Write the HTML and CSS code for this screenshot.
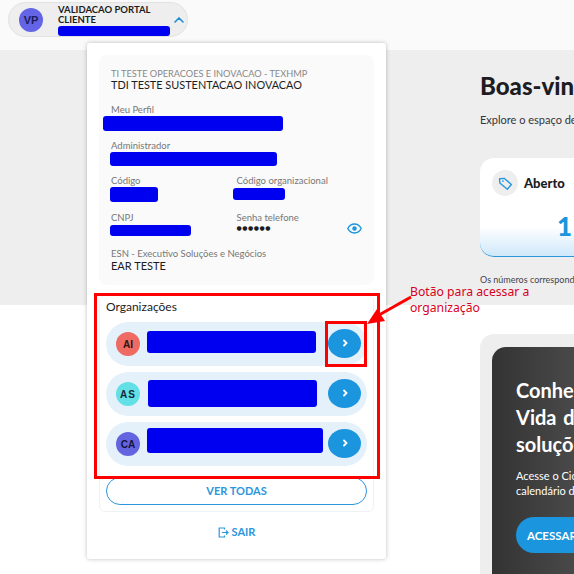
FILE: index.html
```html
<!DOCTYPE html>
<html lang="en">
<head>
    <meta charset="UTF-8">
    <meta name="viewport" content="width=device-width, initial-scale=1.0">
    <title>Portal Cliente</title>
    <link rel="stylesheet" href="styles.css">
</head>
<body>

<!-- Header -->
<header class="topbar">
    <div class="user-pill">
        <span class="avatar avatar-vp">VP</span>
        <div class="user-text">
            <div class="user-name">VALIDACAO PORTAL CLIENTE</div>
            <div class="redact redact-user"></div>
        </div>
        <svg class="chevron" width="10" height="6" viewBox="0 0 10 6"><path d="M1 5l4-4 4 4" fill="none" stroke="#1b8fd6" stroke-width="1.6" stroke-linecap="round"/></svg>
    </div>
</header>

<!-- Welcome band -->
<section class="hero">
    <h1>Boas-vindas</h1>
    <p class="hero-sub">Explore o espaço de atendimento</p>
    <div class="stat-card">
        <div class="stat-head">
            <span class="stat-icon">
                <svg width="15" height="15" viewBox="0 0 16 16"><path d="M2 2.5h5.2l7 7-4.7 4.7-7.5-7.1z" fill="none" stroke="#2b96dc" stroke-width="1.5" stroke-linejoin="round" transform="rotate(-4 8 8)"/><circle cx="5.2" cy="5.4" r="1" fill="#2b96dc"/></svg>
            </span>
            <span class="stat-label">Aberto</span>
        </div>
        <div class="stat-value">1</div>
    </div>
    <p class="hero-note">Os números correspondem aos chamados</p>
</section>

<!-- Lower promo -->
<section class="promo-wrap">
    <div class="promo-frame">
        <div class="promo">
            <h2>Conheça o Ciclo<br>Vida das nossas<br>soluções</h2>
            <p>Acesse o Ciclo de Vida e veja o<br>calendário de todas as soluções</p>
            <button class="promo-btn">ACESSAR</button>
        </div>
    </div>
</section>

<!-- Dropdown panel -->
<div class="panel">
    <div class="info-card">
        <div class="info-small">TI TESTE OPERACOES E INOVACAO - TEXHMP</div>
        <div class="info-strong">TDI TESTE SUSTENTACAO INOVACAO</div>

        <div class="label label-perfil">Meu Perfil</div>
        <div class="redact redact-perfil"></div>

        <div class="label label-admin">Administrador</div>
        <div class="redact redact-admin"></div>

        <div class="info-grid">
            <div>
                <div class="label">Código</div>
                <div class="redact redact-codigo"></div>
            </div>
            <div>
                <div class="label">Código organizacional</div>
                <div class="redact redact-org"></div>
            </div>
            <div>
                <div class="label">CNPJ</div>
                <div class="redact redact-cnpj"></div>
            </div>
            <div class="senha">
                <div class="label">Senha telefone</div>
                <div class="dots">&#9679;&#9679;&#9679;&#9679;&#9679;&#9679;</div>
                <svg class="eye" width="15" height="11" viewBox="0 0 15 11"><path d="M.8 5.5C2.3 2.6 4.7 1 7.5 1s5.2 1.6 6.7 4.5C12.7 8.4 10.3 10 7.5 10S2.3 8.4.8 5.5z" fill="none" stroke="#1b95dd" stroke-width="1.4"/><circle cx="7.5" cy="5.5" r="2.2" fill="#1b95dd"/></svg>
            </div>
        </div>

        <div class="label label-esn">ESN - Executivo Soluções e Negócios</div>
        <div class="info-ear">EAR TESTE</div>
    </div>

    <div class="org-card">
        <h3>Organizações</h3>
        <div class="org-row">
            <span class="avatar avatar-ai">AI</span>
            <div class="redact redact-row1"></div>
            <button class="go-btn"><svg width="6" height="8" viewBox="0 0 6 8"><path d="M2 1.5L4.5 4 2 6.5" fill="none" stroke="#fff" stroke-width="1.8" stroke-linecap="round"/></svg></button>
        </div>
        <div class="org-row">
            <span class="avatar avatar-as">AS</span>
            <div class="redact redact-row2"></div>
            <button class="go-btn"><svg width="6" height="8" viewBox="0 0 6 8"><path d="M2 1.5L4.5 4 2 6.5" fill="none" stroke="#fff" stroke-width="1.8" stroke-linecap="round"/></svg></button>
        </div>
        <div class="org-row">
            <span class="avatar avatar-ca">CA</span>
            <div class="redact redact-row3"></div>
            <button class="go-btn"><svg width="6" height="8" viewBox="0 0 6 8"><path d="M2 1.5L4.5 4 2 6.5" fill="none" stroke="#fff" stroke-width="1.8" stroke-linecap="round"/></svg></button>
        </div>
        <button class="see-all">VER TODAS</button>
    </div>

    <a class="logout">
        <svg width="11" height="11" viewBox="0 0 11 11"><path d="M6.5 2.5V1H1.2v9h5.3V8.5M4 5.5h6M8 3.5l2 2-2 2" fill="none" stroke="#2b96dc" stroke-width="1.2"/></svg>
        SAIR
    </a>
</div>

<!-- Annotations drawn over the screenshot -->
<div class="note-box note-box-list"></div>
<div class="note-box note-box-btn"></div>
<svg class="note-arrow" width="50" height="32" viewBox="0 0 50 32"><path d="M44 2L12 20" stroke="#f00" stroke-width="3"/><path d="M0 29l10-15 8 12z" fill="#f00"/></svg>
<div class="note-text">Botão para acessar a<br>organização</div>

</body>
</html>
```

FILE: styles.css
```css
html, body {
    margin: 0;
    height: 574px;
    overflow: hidden;
}
body {
    font-family: "Lato", "Open Sans", sans-serif;
    background-color: #fff;
    color: #1c1c22;
    position: relative;
}

/* Redacted bars */
.redact {
    background-color: #0000f0;
    border-radius: 3px;
}
.redact-user { width: 112px; height: 10px; margin-top: 1px; }
.redact-perfil { width: 180px; height: 15px; margin-left: -8px; }
.redact-admin { width: 167px; height: 14px; margin-left: -1px; }
.redact-codigo { width: 48px; height: 15px; margin-left: -1px; }
.redact-org { width: 52px; height: 12px; margin-left: -4px; margin-top: 1px; }
.redact-cnpj { width: 81px; height: 11px; margin-left: -1px; margin-top: 1px; }
.redact-row1 { width: 169px; height: 22px; margin-bottom: 5px; }
.redact-row2 { width: 169px; height: 27px; margin-bottom: 1px; }
.redact-row3 { width: 176px; height: 25px; margin-bottom: 7px; }

/* Header */
.topbar {
    height: 50px;
    background-color: #fafafa;
    box-sizing: border-box;
    padding: 2px 0 0 8px;
}
.user-pill {
    width: 180px;
    height: 35px;
    box-sizing: border-box;
    padding-left: 10px;
    background-color: #eee;
    border: 1px solid #e2e2e2;
    border-radius: 18px;
    display: flex;
    align-items: center;
}
.user-text {
    width: 112px;
    margin-left: 15px;
}
.user-name {
    font-size: 9.5px;
    font-weight: 700;
    line-height: 10px;
    margin-top: 1px;
}
.chevron {
    margin-left: 4px;
}

/* Avatars */
.avatar {
    flex: none;
    width: 24px;
    height: 24px;
    border-radius: 50%;
    display: flex;
    align-items: center;
    justify-content: center;
    font-family: "Liberation Sans", sans-serif;
    font-size: 10px;
    font-weight: 700;
}
.avatar-vp { background-color: #6464e6; color: #1c1c5a; font-size: 11px; }
.avatar-ai { background-color: #ee6a62; color: #2a1414; }
.avatar-as { background-color: #62e0e6; color: #14283c; letter-spacing: 1px; }
.avatar-ca { background-color: #6464e0; color: #14143c; }

/* Welcome band */
.hero {
    height: 255px;
    box-sizing: border-box;
    background-color: #eee;
    padding: 22px 0 0 480px;
    width: 100%;
    white-space: nowrap;
}
.hero h1 {
    margin: 0;
    font-size: 24px;
    font-weight: 900;
    line-height: 28px;
}
.hero-sub {
    margin: 13px 0 0;
    font-size: 11px;
    line-height: 14px;
    color: #33333a;
}
.stat-card {
    margin-top: 31px;
    width: 300px;
    height: 99px;
    box-sizing: border-box;
    background: linear-gradient(#fff 70%, #cfe8fa);
    border-bottom: 1px solid #2b96dc;
    border-radius: 14px;
    padding: 12px;
}
.stat-head {
    display: flex;
    align-items: center;
}
.stat-icon {
    width: 26px;
    height: 26px;
    border-radius: 50%;
    background-color: #eee;
    display: flex;
    align-items: center;
    justify-content: center;
}
.stat-label {
    margin-left: 6px;
    font-size: 13px;
    font-weight: 900;
}
.stat-value {
    margin: 16px 0 0 65px;
    font-size: 26px;
    font-weight: 900;
    line-height: 28px;
    color: #1b95dd;
}
.hero-note {
    margin: 17px 0 0;
    font-size: 9px;
    line-height: 12px;
    color: #44444c;
}

/* Lower promo */
.promo-wrap {
    padding: 29px 0 0 480px;
    white-space: nowrap;
}
.promo-frame {
    width: 300px;
    height: 300px;
    box-sizing: border-box;
    background-color: #eee;
    border-radius: 14px;
    padding: 13px 0 0 12px;
}
.promo {
    height: 300px;
    box-sizing: border-box;
    background: linear-gradient(90deg, #333 0, #4e4e4e 100px);
    border-radius: 14px 0 0 0;
    padding: 30px 0 0 24px;
    color: #fff;
}
.promo h2 {
    margin: 0;
    font-size: 20px;
    font-weight: 700;
    line-height: 27px;
    word-spacing: 2px;
}
.promo p {
    margin: 10px 0 0;
    font-size: 11px;
    line-height: 15px;
}
.promo-btn {
    margin-top: 19px;
    width: 140px;
    height: 36px;
    padding: 0 0 0 11px;
    text-align: left;
    border: none;
    border-radius: 18px;
    background-color: #1b95dd;
    color: #fff;
    font-family: inherit;
    font-size: 11.5px;
    font-weight: 700;
}

/* Dropdown panel */
.panel {
    position: absolute;
    left: 87px;
    top: 43px;
    width: 299px;
    height: 516px;
    box-sizing: border-box;
    background-color: #fff;
    border-radius: 3px;
    box-shadow: 0 0 4px rgba(0,0,0,0.25);
    padding: 12px 12px 0;
}
.info-card {
    height: 230px;
    box-sizing: border-box;
    background-color: #fafafa;
    border-radius: 8px;
    padding: 13px 12px 0;
}
.label {
    font-size: 9.5px;
    line-height: 12px;
    color: #777;
}
.info-small {
    font-size: 9.2px;
    line-height: 12px;
    color: #888;
}
.info-strong {
    margin-top: -2px;
    font-size: 10.9px;
    font-weight: 400;
    line-height: 13px;
}
.label-perfil { margin-top: 13px; }
.label-admin { margin-top: 9px; }
.info-grid {
    display: grid;
    grid-template-columns: 125.5px 1fr;
    row-gap: 10px;
    margin-top: 9px;
}
.senha {
    position: relative;
}
.dots {
    font-family: "DejaVu Sans", sans-serif;
    font-size: 6px;
    line-height: 12px;
    letter-spacing: 0.5px;
    margin-top: -2px;
}
.eye {
    position: absolute;
    right: 0;
    top: 11px;
}
.label-esn { margin-top: 12px; }
.info-ear {
    margin-top: -1px;
    font-size: 11px;
    font-weight: 400;
    line-height: 13px;
}

.org-card {
    margin-top: 10px;
    height: 217px;
    box-sizing: border-box;
    border: 1px solid #eef2f6;
    border-radius: 6px;
    padding: 3px 6px 0;
}
.org-card h3 {
    margin: 0 0 8px;
    font-size: 12px;
    font-weight: 400;
    line-height: 15px;
    color: #222;
}
.org-row {
    height: 44px;
    margin-bottom: 6px;
    box-sizing: border-box;
    background-color: #e4f1fb;
    border-radius: 22px;
    padding: 0 6px 0 10px;
    display: flex;
    align-items: center;
}
.org-row .redact {
    margin-left: 7px;
}
.org-row .redact-row2 {
    margin-left: 8px;
}
.org-row .go-btn {
    margin-left: auto;
}
.go-btn {
    flex: none;
    width: 33px;
    height: 29px;
    padding: 0 0 2px;
    border: none;
    border-radius: 50%;
    background-color: #1b95dd;
    margin-bottom: 2px;
}
.see-all {
    display: block;
    width: 100%;
    height: 28px;
    margin-top: 11px;
    padding-bottom: 3px;
    background-color: #fff;
    border: 1px solid #2b96dc;
    border-radius: 14px;
    color: #2b96dc;
    font-family: inherit;
    font-size: 11px;
    font-weight: 700;
}
.logout {
    display: flex;
    align-items: center;
    justify-content: center;
    gap: 3px;
    margin-top: 13px;
    font-size: 11px;
    font-weight: 700;
    line-height: 14px;
    color: #2b96dc;
}

/* Annotations */
.note-box {
    position: absolute;
    box-sizing: border-box;
    border: 3px solid #f00;
}
.note-box-list {
    left: 94px;
    top: 293px;
    width: 286px;
    height: 186px;
}
.note-box-btn {
    left: 325px;
    top: 321px;
    width: 42px;
    height: 46px;
}
.note-arrow {
    position: absolute;
    left: 367px;
    top: 295px;
}
.note-text {
    position: absolute;
    left: 410px;
    top: 284px;
    font-family: "Noto Sans", sans-serif;
    font-size: 12.2px;
    line-height: 16px;
    color: #d8001c;
}
```
